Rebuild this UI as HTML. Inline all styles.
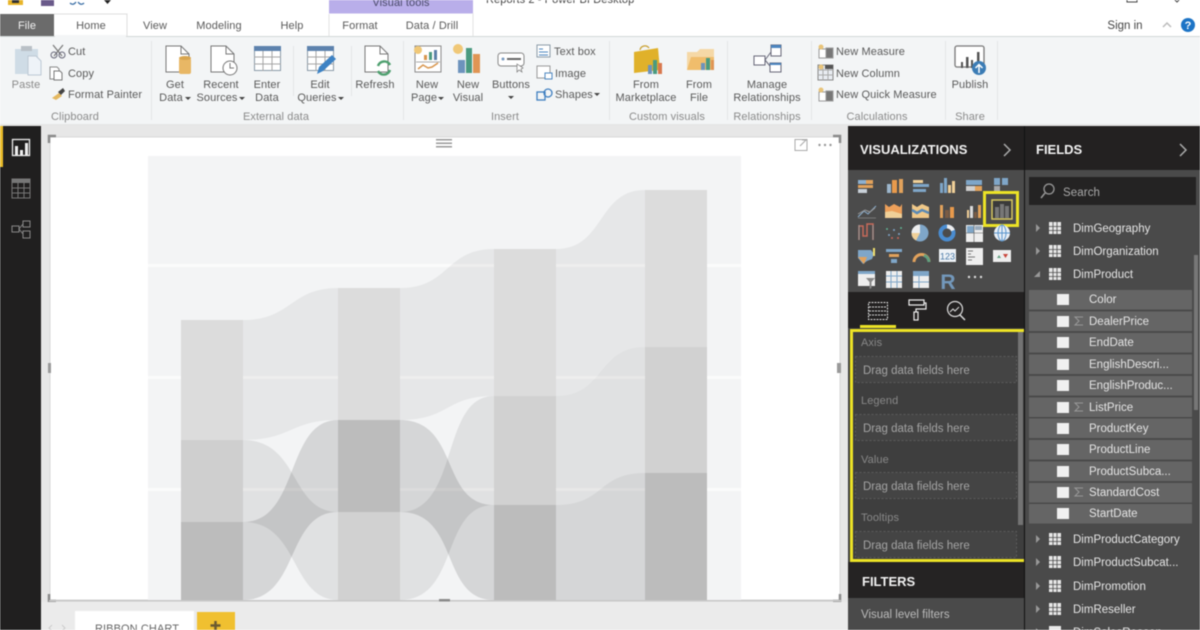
<!DOCTYPE html>
<html><head><meta charset="utf-8"><style>
html,body{margin:0;padding:0;width:1200px;height:630px;overflow:hidden;background:#fff}
svg{display:block;position:absolute;left:0;top:0;filter:blur(.4px)}
text{font-family:"Liberation Sans",sans-serif;font-size:11px;fill:#5a5a5a;letter-spacing:.1px}
.m{text-anchor:middle}
.g{fill:#8a8a8a}
.f{fill:#e6e6e6;font-size:11.5px;letter-spacing:0}
.w{fill:#a4a4a4;font-size:11.5px;letter-spacing:0}
.h{fill:#f2f2f2;font-size:13px;font-weight:bold;letter-spacing:0}
</style></head><body>
<svg width="1200" height="630" viewBox="0 0 1200 630" xmlns="http://www.w3.org/2000/svg">
<!-- title -->
<rect width="1200" height="630" fill="#fff"/>
<rect x="8" y="-6" width="15" height="11" fill="#e8b52a"/><rect x="12" y="-2" width="7" height="5" fill="#333"/>
<rect x="41" y="-4" width="13" height="10" fill="#6a5a8a"/>
<path d="M70 3q3 3 6-1M84 3q-3 3-6-1" stroke="#3a6ea5" stroke-width="1.300" fill="none"/>
<path d="M104 0h7l-3.500 4z" fill="#222"/>
<rect x="329" y="-1" width="144" height="14.500" fill="#b9aeea"/>
<text x="401" y="6" class="m" style="fill:#4a4a6a">Visual tools</text>
<text x="486" y="3" style="fill:#444">Reports 2 - Power BI Desktop</text>
<rect x="1127" y="-6" width="10" height="8" fill="none" stroke="#444"/>
<path d="M1173-2l4 4 4-4" stroke="#444" fill="none"/>
<!-- tabs -->
<rect x="0" y="14" width="54" height="22" fill="#6b6b6b"/>
<text x="27" y="29" class="m" style="fill:#f2f2f2">File</text>
<path d="M54 14H127V36" fill="none" stroke="#ddd"/>
<text x="91" y="29" class="m">Home</text>
<text x="155" y="29" class="m">View</text>
<text x="219" y="29" class="m">Modeling</text>
<text x="292" y="29" class="m">Help</text>
<text x="360" y="29" class="m">Format</text>
<text x="432" y="29" class="m">Data / Drill</text>
<path d="M329 14V36M473 13V36" stroke="#e4e4e4"/>
<text x="1125" y="29" class="m" style="fill:#444;font-size:11.500px;letter-spacing:0">Sign in</text>
<path d="M1163 27l4-4 4 4" stroke="#bbb" stroke-width="1.500" fill="none"/>
<circle cx="1188" cy="25" r="7" fill="#1d74c6"/>
<text x="1188" y="29" class="m" style="fill:#fff;font-size:11px;font-weight:bold">?</text>
<!-- ribbon -->
<rect x="0" y="36" width="1200" height="90" fill="#f3f5f6"/>
<rect x="0" y="36" width="1200" height="1" fill="#d3d8d8"/>
<rect x="55" y="35" width="71" height="3" fill="#f3f5f6"/>
<rect x="0" y="124" width="1200" height="2" fill="#e6e6e6"/>
<g fill="#e3e6e7">
<rect x="151" y="41" width="1" height="79"/><rect x="403" y="41" width="1" height="79"/><rect x="609" y="41" width="1" height="79"/><rect x="727" y="41" width="1" height="79"/><rect x="811" y="41" width="1" height="79"/><rect x="945" y="41" width="1" height="79"/><rect x="997" y="41" width="1" height="79"/><rect x="293" y="46" width="1" height="50"/><rect x="351" y="46" width="1" height="50"/>
</g>
<!-- paste -->
<rect x="15" y="49" width="23" height="25" fill="#cfdce6"/><rect x="21" y="46" width="11" height="5" fill="#b9c0c6"/>
<path d="M28 56h8l5 5v14H28z" fill="#eef3f8" stroke="#bcc8d4"/>
<text x="26" y="88" class="m g">Paste</text>
<!-- cut etc -->
<path d="M53 45l9 11M63 45l-9 11" stroke="#777" stroke-width="1.200"/><circle cx="54" cy="55" r="3" fill="none" stroke="#667"/><circle cx="62" cy="55" r="3" fill="none" stroke="#667"/>
<text x="68" y="55">Cut</text>
<path d="M50 67h7l2 2v10h-9z" fill="#fff" stroke="#888"/><path d="M54 71h6l2 2v7h-8z" fill="#fff" stroke="#777"/>
<text x="68" y="77">Copy</text>
<path d="M52 98l7-5 3 3-6 4z" fill="#e4b860"/><path d="M58 92l5-4 2 3-4 4z" fill="#444"/>
<text x="68" y="98">Format Painter</text>
<text x="75" y="120" class="m g">Clipboard</text>
<text x="276" y="120" class="m g">External data</text>
<!-- get data -->
<path d="M166 46h15l8 8v18h-23z" fill="#fff" stroke="#777"/><path d="M181 46v8h8" fill="none" stroke="#777"/>
<rect x="179" y="58" width="12" height="16" rx="2" fill="#e8b765"/><ellipse cx="185" cy="58" rx="6" ry="2" fill="#d8a54f"/>
<text x="175" y="88" class="m">Get</text><text x="171" y="101" class="m">Data</text><path d="M185 97h6l-3 3z" fill="#444"/>
<!-- recent -->
<path d="M211 46h15l8 8v18h-23z" fill="#fff" stroke="#777"/><path d="M226 46v8h8" fill="none" stroke="#777"/>
<circle cx="230" cy="68" r="7" fill="#fff" stroke="#777"/><path d="M230 63v5h4" stroke="#777" fill="none"/>
<text x="221" y="88" class="m">Recent</text><text x="217" y="101" class="m">Sources</text><path d="M239 97h6l-3 3z" fill="#444"/>
<!-- enter -->
<rect x="254.500" y="46.500" width="26" height="24" fill="#fff" stroke="#8a9aa8"/><rect x="254" y="46" width="27" height="5" fill="#5d82ad"/>
<path d="M254 57h27M254 64h27M263 51v20M272 51v20" stroke="#a5a5a5"/>
<text x="267" y="88" class="m">Enter</text><text x="267" y="101" class="m">Data</text>
<!-- edit -->
<rect x="307.500" y="46.500" width="26" height="24" fill="#fff" stroke="#8a9aa8"/><rect x="307" y="46" width="27" height="5" fill="#5d82ad"/>
<path d="M307 57h27M307 64h27M316 51v20M325 51v20" stroke="#a5a5a5"/>
<path d="M317 74l2-7 13-12 4 4-13 12z" fill="#3d82c4"/>
<text x="320" y="88" class="m">Edit</text><text x="317" y="101" class="m">Queries</text><path d="M338 97h6l-3 3z" fill="#444"/>
<!-- refresh -->
<path d="M365 46h15l8 8v18h-23z" fill="#fff" stroke="#777"/><path d="M380 46v8h8" fill="none" stroke="#777"/>
<path d="M378 66a6.500 6.500 0 0 1 12-1M390 70a6.500 6.500 0 0 1-12 1" stroke="#4fa06f" stroke-width="2.500" fill="none"/>
<text x="375" y="88" class="m">Refresh</text>
<!-- new page -->
<rect x="415" y="46" width="26" height="26" fill="#fff" stroke="#8a8a8a"/><circle cx="418" cy="50" r="4" fill="#f0c878"/>
<rect x="424" y="55" width="3" height="5" fill="#d8964e"/><rect x="429" y="52" width="3" height="8" fill="#4a9a80"/><rect x="434" y="50" width="3" height="10" fill="#5b7fa8"/>
<path d="M416 62h24" stroke="#aaa"/><path d="M418 69l5-4 5 3 4-1 6-4" stroke="#d8964e" stroke-width="1.500" fill="none"/>
<text x="427" y="88" class="m">New</text><text x="424" y="101" class="m">Page</text><path d="M438 97h6l-3 3z" fill="#444"/>
<!-- new visual -->
<circle cx="458" cy="49" r="5" fill="#f0c878"/>
<rect x="458" y="60" width="7" height="13" fill="#6d93bd"/><rect x="466" y="48" width="6" height="25" fill="#4a9a80"/><rect x="473" y="54" width="7" height="19" fill="#df9554"/>
<text x="468" y="88" class="m">New</text><text x="468" y="101" class="m">Visual</text>
<!-- buttons -->
<rect x="498" y="53" width="26" height="13" rx="3" fill="#fff" stroke="#888"/><circle cx="503" cy="59" r="1.500" fill="#7a9bc0"/><rect x="507" y="58" width="14" height="2" fill="#666"/>
<path d="M517 64l0 8 2-2 3 2-1-3 2-1z" fill="#fff" stroke="#777" stroke-width=".7"/>
<text x="511" y="88" class="m">Buttons</text><path d="M508 96h6l-3 3z" fill="#444"/>
<!-- small insert -->
<rect x="537" y="45" width="13" height="12" fill="#fff" stroke="#8a9aa8"/><path d="M539 49h4M539 52h9M539 55h9" stroke="#4c86c0"/>
<text x="554" y="55">Text box</text>
<rect x="537" y="66" width="13" height="12" fill="#fff" stroke="#999"/><rect x="545" y="73" width="7" height="6" fill="#fff" stroke="#4c86c0"/>
<text x="555" y="77">Image</text>
<rect x="537" y="92" width="8" height="8" fill="none" stroke="#3f7fc0" stroke-width="1.300"/><circle cx="548" cy="93" r="4" fill="none" stroke="#3f7fc0" stroke-width="1.300"/>
<text x="555" y="98">Shapes</text><path d="M594 93h6l-3 3z" fill="#444"/>
<text x="505" y="120" class="m g">Insert</text>
<!-- marketplace -->
<path d="M634 52l24-4 2 22-26 3z" fill="#e0b12a"/><path d="M640 50a5 5 0 0 1 9-2" fill="none" stroke="#c9a030" stroke-width="1.300"/>
<rect x="648" y="65" width="4" height="9" fill="#6d93bd"/><rect x="653" y="60" width="4" height="14" fill="#4a9a80"/><rect x="658" y="63" width="4" height="11" fill="#d8784e"/>
<text x="646" y="88" class="m">From</text><text x="646" y="101" class="m">Marketplace</text>
<!-- file -->
<path d="M687 52h10l3-3h14v21h-27z" fill="#f5d8a6"/><path d="M687 70l4-13h23v13z" fill="#f0bd6c"/>
<rect x="701" y="63" width="4" height="7" fill="#6d93bd"/><rect x="706" y="58" width="4" height="12" fill="#4a9a80"/><rect x="711" y="60" width="3" height="10" fill="#df9554"/>
<text x="699" y="88" class="m">From</text><text x="699" y="101" class="m">File</text>
<!-- manage -->
<g fill="#fff" stroke="#667"><rect x="771" y="45" width="10" height="11"/><rect x="754" y="56" width="11" height="9"/><rect x="770" y="63" width="11" height="9"/></g>
<path d="M771 45h10v3h-10zM770 63h11v2h-11z" fill="#4c86c0"/>
<path d="M765 60l6-8M765 60l5 6" stroke="#667"/>
<text x="767" y="88" class="m">Manage</text><text x="767" y="101" class="m">Relationships</text>
<text x="667" y="120" class="m g">Custom visuals</text>
<text x="767" y="120" class="m g">Relationships</text>
<!-- calculations -->
<g fill="#fff" stroke="#999"><rect x="819" y="49" width="9" height="9"/><rect x="826" y="48" width="7" height="10" fill="#777"/></g><circle cx="821" cy="47" r="2.500" fill="#e8c47a"/>
<text x="836" y="55">New Measure</text>
<rect x="818" y="65" width="15" height="15" fill="#e9edf2" stroke="#888"/><path d="M818 70h15M818 75h15M823 65v15M828 65v15" stroke="#aaa"/><rect x="825" y="65" width="8" height="4" fill="#555"/><circle cx="821" cy="67" r="2.500" fill="#e8c47a"/>
<text x="836" y="77">New Column</text>
<g fill="#fff" stroke="#999"><rect x="819" y="92" width="9" height="9"/><rect x="826" y="91" width="7" height="10" fill="#777"/></g><circle cx="821" cy="90" r="2.500" fill="#e8c47a"/>
<text x="836" y="98">New Quick Measure</text>
<text x="877" y="120" class="m g">Calculations</text>
<!-- publish -->
<rect x="955" y="46" width="29" height="21" rx="2" fill="#fff" stroke="#777" stroke-width="1.300"/>
<rect x="961" y="62" width="2" height="6" fill="#555"/><rect x="966" y="57" width="2.500" height="11" fill="#555"/><rect x="971" y="60" width="2" height="8" fill="#555"/><rect x="977" y="52" width="2.500" height="14" fill="#555"/>
<circle cx="979" cy="68" r="7" fill="#3b7cb5"/><path d="M979 73v-8M975.500 68l3.500-3.500 3.500 3.500" stroke="#fff" stroke-width="1.500" fill="none"/>
<text x="970" y="88" class="m">Publish</text>
<text x="970" y="120" class="m g">Share</text>

<!-- rail -->
<rect x="0" y="126" width="41" height="504" fill="#201f1f"/>
<rect x="0" y="126" width="3" height="41" fill="#e8bb2a"/>
<rect x="12.500" y="139.500" width="17" height="16" fill="none" stroke="#eee" stroke-width="1.300"/>
<rect x="15" y="146" width="3" height="9" fill="#eee"/><rect x="20" y="150" width="3" height="5" fill="#eee"/><rect x="25" y="143" width="3" height="12" fill="#eee"/>
<rect x="12" y="179" width="18" height="19" fill="none" stroke="#777"/><rect x="12" y="179" width="18" height="4" fill="#777"/>
<path d="M12 188h18M12 193h18M18 183v15M24 183v15" stroke="#777"/>
<g fill="none" stroke="#888"><rect x="12" y="226" width="7" height="6"/><rect x="23" y="221" width="7" height="6"/><rect x="23" y="231" width="7" height="7"/><path d="M19 229l4-5M19 229l4 5"/></g>

<!-- canvas -->
<rect x="41" y="126" width="807" height="504" fill="#e7e7e7"/>
<rect x="50" y="137" width="790" height="463" fill="#fff" stroke="#d8d8d8"/>
<path d="M49 143v-7h7M833 136h7v7M49 594v7h7M840 594v7h-7" fill="none" stroke="#8a8a8a" stroke-width="2.500"/>
<rect x="48" y="363" width="3" height="10" fill="#999"/><rect x="837" y="363" width="4" height="10" fill="#999"/>
<rect x="436" y="139" width="16" height="1.500" fill="#999"/><rect x="436" y="142.500" width="16" height="1.500" fill="#999"/><rect x="436" y="146" width="16" height="1.500" fill="#999"/>
<rect x="795" y="139.500" width="12" height="11" fill="#fff" stroke="#aaa"/><path d="M800 146l6-6M802 140h5v4" stroke="#aaa" fill="none"/>
<circle cx="819.500" cy="145" r="1.200" fill="#999"/><circle cx="825" cy="145" r="1.200" fill="#999"/><circle cx="830.500" cy="145" r="1.200" fill="#999"/>
<!-- chart -->
<rect x="148" y="156" width="593" height="444" fill="#f3f4f5"/>
<path d="M148 265.500h593M148 377.500h593M148 489.500h593" stroke="#fbfbfb" stroke-width="3"/>
<!-- ribbons series A -->
<g fill="#000" fill-opacity=".05">
<path d="M243 320C292 320 290 288 338 288V420C290 420 292 440 243 440Z"/>
<path d="M400 288C450 288 445 249 494 249V396C445 396 450 420 400 420Z"/>
<path d="M556 249C605 249 597 190 645 190V347C597 347 605 396 556 396Z"/>
</g>
<!-- series B -->
<g fill="#000" fill-opacity=".075">
<path d="M243 440C300 440 290 512 338 512V600C290 600 300 522 243 522Z"/>
<path d="M400 512C460 512 440 396 494 396V505C440 505 460 600 400 600Z"/>
<path d="M556 396C605 396 597 347 645 347V473C597 473 605 505 556 505Z"/>
</g>
<!-- series C -->
<g fill="#000" fill-opacity=".12">
<path d="M243 522C300 522 285 420 338 420V512C285 512 300 600 243 600Z"/>
<path d="M400 420C460 420 440 505 494 505V600C440 600 460 512 400 512Z"/>
<path d="M556 505C605 505 597 473 645 473V600H556Z"/>
</g>
<g>
<rect x="181" y="320" width="62" height="120" fill="#dcdcdc"/><rect x="181" y="440" width="62" height="82" fill="#cfcfcf"/><rect x="181" y="522" width="62" height="78" fill="#bcbcbc"/>
<rect x="338" y="288" width="62" height="132" fill="#dcdcdc"/><rect x="338" y="420" width="62" height="92" fill="#bcbcbc"/><rect x="338" y="512" width="62" height="88" fill="#d1d1d1"/>
<rect x="494" y="249" width="62" height="147" fill="#dcdcdc"/><rect x="494" y="396" width="62" height="109" fill="#d1d1d1"/><rect x="494" y="505" width="62" height="95" fill="#bcbcbc"/>
<rect x="645" y="190" width="62" height="157" fill="#dcdcdc"/><rect x="645" y="347" width="62" height="126" fill="#d1d1d1"/><rect x="645" y="473" width="62" height="127" fill="#bcbcbc"/>
</g>
<rect x="49" y="600" width="792" height="1.500" fill="#c8c8c8"/>
<rect x="439" y="599" width="11" height="2.500" fill="#8a8a8a"/>
<!-- tab strip -->
<rect x="41" y="602" width="807" height="28" fill="#ebebeb"/>
<path d="M52 625l-3 3 3 3M62 625l3 3-3 3" stroke="#ccc" fill="none"/>
<rect x="75" y="611" width="119" height="19" fill="#fff"/>
<text x="137" y="632" class="m" style="fill:#666">RIBBON CHART</text>
<rect x="197" y="612" width="38" height="18" fill="#f0c030"/>
<path d="M210.500 625.500h10M215.500 621v10" stroke="#6a5a30" stroke-width="2.500"/>

<!-- viz panel -->
<rect x="848" y="126" width="352" height="44" fill="#232121"/>
<rect x="848" y="170" width="176" height="122" fill="#4b4b4b"/>
<rect x="848" y="292" width="176" height="36" fill="#232121"/>
<text x="860" y="154" class="h">VISUALIZATIONS</text>
<path d="M1004 144l6 6-6 6" stroke="#aaa" stroke-width="1.500" fill="none"/>
<!-- viz icons row 1 -->
<g>
<g><rect x="858" y="180" width="8" height="4" fill="#8db0d0"/><rect x="866" y="180" width="7" height="4" fill="#e2a25c"/><rect x="858" y="185" width="15" height="3" fill="#e2a25c"/><rect x="858" y="189" width="9" height="4" fill="#c8d0d8"/></g>
<g><rect x="887" y="184" width="4" height="9" fill="#9db6cc"/><rect x="892" y="180" width="5" height="13" fill="#e89a4c"/><rect x="899" y="179" width="4" height="14" fill="#e2a25c"/></g>
<g><rect x="913" y="180" width="10" height="3" fill="#f0d098"/><rect x="913" y="184" width="16" height="3" fill="#7fa6c8"/><rect x="913" y="189" width="13" height="3" fill="#7fa6c8"/></g>
<g><rect x="940" y="183" width="3" height="10" fill="#7fa6c8"/><rect x="944" y="178" width="3" height="15" fill="#7fa6c8"/><rect x="948" y="185" width="3" height="8" fill="#f0d098"/><rect x="952" y="181" width="3" height="12" fill="#f0d098"/></g>
<g><rect x="966" y="180" width="16" height="5" fill="#7fa6c8"/><rect x="966" y="186" width="9" height="5" fill="#d0d0d0"/><rect x="975" y="186" width="7" height="5" fill="#e2a25c"/></g>
<g><rect x="994" y="178" width="6" height="7" fill="#7fa6c8"/><rect x="1002" y="178" width="6" height="7" fill="#7fa6c8"/><rect x="994" y="186" width="6" height="5" fill="#a8a8a8"/></g>
</g>
<!-- row 2 -->
<path d="M858 217l6-6 4 3 8-8" stroke="#8db0d0" fill="none"/><path d="M858 218h18" stroke="#777"/><path d="M858 214l7-4 5 2 5-4" stroke="#999" fill="none"/>
<path d="M885 204l4 3 5-3 6 3 2-3v14h-17z" fill="#eda05a"/><path d="M885 212l7-1 10 3v4h-17z" fill="#f0d098"/>
<path d="M912 204l5 3 5-3 7 3v11h-17z" fill="#f0c888"/><path d="M912 210l5 3 5-3 7 3" stroke="#5b8ab5" stroke-width="2.500" fill="none"/>
<rect x="940" y="205" width="3" height="13" fill="#e2a25c"/><rect x="945" y="210" width="4" height="8" fill="#7a5c44"/><rect x="950" y="207" width="4" height="11" fill="#e89a4c"/>
<rect x="967" y="210" width="2" height="8" fill="#f0d098"/><rect x="970" y="206" width="3" height="12" fill="#ddd"/><rect x="974" y="212" width="3" height="6" fill="#7a5c44"/><rect x="978" y="205" width="3" height="13" fill="#e2a25c"/>
<rect x="992" y="200" width="20" height="19" fill="#3a3a3a" stroke="#d8c860" stroke-width="1.500"/>
<rect x="995" y="207" width="4" height="11" fill="#777"/><rect x="1000" y="204" width="4" height="14" fill="#777"/><rect x="1005" y="206" width="4" height="12" fill="#777"/>
<rect x="984.500" y="192.500" width="33" height="33" fill="none" stroke="#ece326" stroke-width="3"/>
<!-- row 3 -->
<path d="M859 240v-14h4v10h4v-12h6v16" stroke="#c86a5a" stroke-width="1.500" fill="none"/><path d="M859 225v15M873 225v15" stroke="#999"/>
<g fill="#7fa6c8"><circle cx="889" cy="235" r="1"/><circle cx="894" cy="230" r="1"/><circle cx="899" cy="234" r="1"/></g><g fill="#c8655a"><circle cx="892" cy="238" r="1"/><circle cx="898" cy="238" r="1"/></g><g fill="#60b090"><circle cx="887" cy="229" r="1"/><circle cx="901" cy="228" r="1"/></g>
<circle cx="920" cy="233" r="8.500" fill="#7fa6c8"/><path d="M920 233V224.500A8.500 8.500 0 0 0 911.500 233Z" fill="#eee"/><path d="M920 233H911.500A8.500 8.500 0 0 0 916 240.500Z" fill="#f0d098"/>
<circle cx="947" cy="233" r="6.500" fill="none" stroke="#4a8cd0" stroke-width="4"/><path d="M947 226.500a6.500 6.500 0 0 1 6 4" stroke="#eee" stroke-width="4" fill="none"/>
<rect x="966" y="225" width="17" height="17" fill="#eee"/><rect x="967" y="226" width="7" height="7" fill="#7fa6c8"/><rect x="975" y="226" width="7" height="4" fill="#9ab"/><path d="M966 233h17M974 225v17" stroke="#555" stroke-width=".6"/>
<circle cx="1002" cy="233" r="8" fill="#e8eff6"/><path d="M994 233h16M1002 225v16" stroke="#5b95cc"/><ellipse cx="1002" cy="233" rx="4" ry="8" fill="none" stroke="#5b95cc"/>
<!-- row 4 -->
<path d="M858 250h13l3 4-2 5-5 2-4 3-5-6z" fill="#7fa6c8"/><path d="M858 257h9l-3 7z" fill="#e2a25c"/><rect x="873" y="248" width="2" height="8" fill="#f0e070"/>
<rect x="886" y="249" width="16" height="3" fill="#7fa6c8"/><rect x="889" y="254" width="10" height="3" fill="#e2a25c"/><rect x="891" y="259" width="6" height="4" fill="#7fa6c8"/>
<path d="M914 262a7.500 7.500 0 0 1 15 0" stroke="#e2a25c" stroke-width="3" fill="none"/><path d="M924 255.500a7.500 7.500 0 0 1 5 6.500" stroke="#60a080" stroke-width="3" fill="none"/>
<rect x="939" y="249" width="17" height="13" fill="#eef2f6"/><text x="947.500" y="259.500" class="m" style="font-size:9px;fill:#4a7aa8;letter-spacing:0">123</text>
<rect x="966" y="248" width="17" height="17" fill="#eee"/><path d="M968 251h5M968 254h3M968 257h7M968 260h4" stroke="#777"/>
<rect x="993" y="250" width="18" height="12" fill="#eee"/><path d="M997 258l2-3 2 3z" fill="#60a080"/><path d="M1003 254h5l-2.500 4z" fill="#c8453a"/>
<!-- row 5 -->
<rect x="858" y="271" width="17" height="15" fill="#eee"/><rect x="858" y="271" width="17" height="3" fill="#7fa6c8"/><path d="M866 278h9l-3.500 4v6l-2 1v-7z" fill="#888"/>
<rect x="886" y="271" width="16" height="17" fill="#eee"/><path d="M886 276h16M886 282h16M891 271v17M897 271v17" stroke="#7fa6c8"/>
<rect x="913" y="271" width="16" height="17" fill="#eee"/><rect x="913" y="271" width="16" height="5" fill="#7fa6c8"/><path d="M913 282h16M919 271v17" stroke="#7fa6c8"/>
<text x="948" y="289" class="m" style="font-size:21px;font-weight:bold;fill:#7398bb;letter-spacing:0">R</text>
<g fill="#ddd"><circle cx="969" cy="277" r="1.200"/><circle cx="975" cy="277" r="1.200"/><circle cx="981" cy="277" r="1.200"/></g>
<!-- tabs in viz -->
<rect x="868.500" y="302.500" width="19" height="17" fill="none" stroke="#ddd" stroke-dasharray="2 1"/><path d="M869 307h18M869 311h18M869 315h18" stroke="#ddd" stroke-dasharray="2 1"/>
<rect x="860" y="325" width="36" height="3" fill="#ece326"/>
<path d="M909 300h15v5h-15zM924 303h2v6h-10v3" fill="none" stroke="#eee" stroke-width="1.200"/><rect x="914" y="312" width="4" height="8" fill="none" stroke="#eee" stroke-width="1.200"/>
<circle cx="955" cy="309" r="7.500" fill="none" stroke="#ddd" stroke-width="1.200"/><path d="M960 315l5 5" stroke="#ddd" stroke-width="1.500"/><path d="M950 312l3-3 2 2 4-4" stroke="#ddd" fill="none"/>
<!-- wells -->
<rect x="848" y="328" width="176" height="234" fill="#3e3e3e"/>
<text x="861" y="346" style="fill:#888;font-size:11px">Axis</text>
<text x="861" y="404" style="fill:#888;font-size:11px">Legend</text>
<text x="861" y="463" style="fill:#888;font-size:11px">Value</text>
<text x="861" y="521" style="fill:#888;font-size:11px">Tooltips</text>
<g fill="#444" stroke="#5c5c5c" stroke-dasharray="2 2"><rect x="855.500" y="356.500" width="161" height="26"/><rect x="855.500" y="414.500" width="161" height="26"/><rect x="855.500" y="472.500" width="161" height="26"/><rect x="855.500" y="531.500" width="161" height="26"/></g>
<text x="863" y="374" class="w">Drag data fields here</text>
<text x="863" y="432" class="w">Drag data fields here</text>
<text x="863" y="490" class="w">Drag data fields here</text>
<text x="863" y="549" class="w">Drag data fields here</text>
<rect x="1018" y="332" width="5" height="193" fill="#737373"/>
<rect x="851.500" y="330.500" width="176" height="230" fill="none" stroke="#ece326" stroke-width="3"/>
<!-- filters -->
<rect x="848" y="562" width="176" height="36" fill="#252323"/>
<rect x="848" y="598" width="176" height="32" fill="#4a4a4a"/>
<text x="862" y="586" class="h">FILTERS</text>
<text x="861" y="618" style="fill:#bbb;font-size:11.500px;letter-spacing:0">Visual level filters</text>
<!-- fields -->
<rect x="1024" y="126" width="1" height="504" fill="#111"/>
<rect x="1025" y="170" width="175" height="460" fill="#4a4a4a"/>
<text x="1036" y="154" class="h">FIELDS</text>
<path d="M1180 144l6 6-6 6" stroke="#aaa" stroke-width="1.500" fill="none"/>
<rect x="1029" y="177" width="167" height="28" fill="#242323"/>
<circle cx="1049" cy="189" r="5" fill="none" stroke="#999" stroke-width="1.300"/><path d="M1045 193l-4 5" stroke="#999" stroke-width="1.500"/>
<text x="1063" y="196" style="fill:#aaa;font-size:11.500px">Search</text>
<rect x="1194" y="255" width="4" height="155" fill="#777"/>
<!-- tables -->
<g>
<path d="M1036 224v8l4-4z M1036 247v8l4-4z M1036 535v8l4-4z M1036 558v8l4-4z M1036 582v8l4-4z M1036 605v8l4-4z M1036 628v8l4-4z" fill="#999"/>
<path d="M1040 271v6h-6z" fill="#999"/>
<g fill="#e8e8e8">
<rect x="1049" y="222" width="12" height="12"/><rect x="1049" y="245" width="12" height="12"/><rect x="1049" y="268" width="12" height="12"/><rect x="1049" y="533" width="12" height="12"/><rect x="1049" y="556" width="12" height="12"/><rect x="1049" y="580" width="12" height="12"/><rect x="1049" y="603" width="12" height="12"/><rect x="1049" y="626" width="12" height="12"/>
</g>
<path d="M1049 226.500h12M1049 230.500h12M1053 222v12M1057 222v12M1049 249.500h12M1049 253.500h12M1053 245v12M1057 245v12M1049 272.500h12M1049 276.500h12M1053 268v12M1057 268v12M1049 537.500h12M1049 541.500h12M1053 533v12M1057 533v12M1049 560.500h12M1049 564.500h12M1053 556v12M1057 556v12M1049 584.500h12M1049 588.500h12M1053 580v12M1057 580v12M1049 607.500h12M1049 611.500h12M1053 603v12M1057 603v12" stroke="#4a4a4a" stroke-width=".8"/>
</g>
<text x="1073" y="232" class="f">DimGeography</text>
<text x="1073" y="255" class="f">DimOrganization</text>
<text x="1073" y="278" class="f">DimProduct</text>
<text x="1073" y="543" class="f">DimProductCategory</text>
<text x="1073" y="566" class="f">DimProductSubcat...</text>
<text x="1073" y="590" class="f">DimPromotion</text>
<text x="1073" y="613" class="f">DimReseller</text>
<text x="1073" y="636" class="f">DimSalesReason</text>
<!-- field rows -->
<g fill="#656565">
<rect x="1029" y="290" width="163" height="19.500"/><rect x="1029" y="311.500" width="163" height="19.500"/><rect x="1029" y="333" width="163" height="19.500"/><rect x="1029" y="354.500" width="163" height="19.500"/><rect x="1029" y="376" width="163" height="19.500"/><rect x="1029" y="397.500" width="163" height="19.500"/><rect x="1029" y="418.500" width="163" height="19.500"/><rect x="1029" y="440" width="163" height="19.500"/><rect x="1029" y="461.500" width="163" height="19.500"/><rect x="1029" y="483" width="163" height="19.500"/><rect x="1029" y="504" width="163" height="19.500"/>
</g>
<g fill="#f0f0f0">
<rect x="1057" y="294" width="12" height="11"/><rect x="1057" y="316" width="12" height="11"/><rect x="1057" y="337" width="12" height="11"/><rect x="1057" y="359" width="12" height="11"/><rect x="1057" y="380" width="12" height="11"/><rect x="1057" y="402" width="12" height="11"/><rect x="1057" y="423" width="12" height="11"/><rect x="1057" y="444" width="12" height="11"/><rect x="1057" y="466" width="12" height="11"/><rect x="1057" y="487" width="12" height="11"/><rect x="1057" y="508" width="12" height="11"/>
</g>
<path d="M1083 317h-8l4 4-4 4h8M1083 403h-8l4 4-4 4h8M1083 488h-8l4 4-4 4h8" stroke="#999" fill="none"/>
<text x="1089" y="303" class="f">Color</text>
<text x="1089" y="325" class="f">DealerPrice</text>
<text x="1089" y="346" class="f">EndDate</text>
<text x="1089" y="368" class="f">EnglishDescri...</text>
<text x="1089" y="389" class="f">EnglishProduc...</text>
<text x="1089" y="411" class="f">ListPrice</text>
<text x="1089" y="432" class="f">ProductKey</text>
<text x="1089" y="453" class="f">ProductLine</text>
<text x="1089" y="475" class="f">ProductSubca...</text>
<text x="1089" y="496" class="f">StandardCost</text>
<text x="1089" y="517" class="f">StartDate</text>
</svg>
</body></html>
